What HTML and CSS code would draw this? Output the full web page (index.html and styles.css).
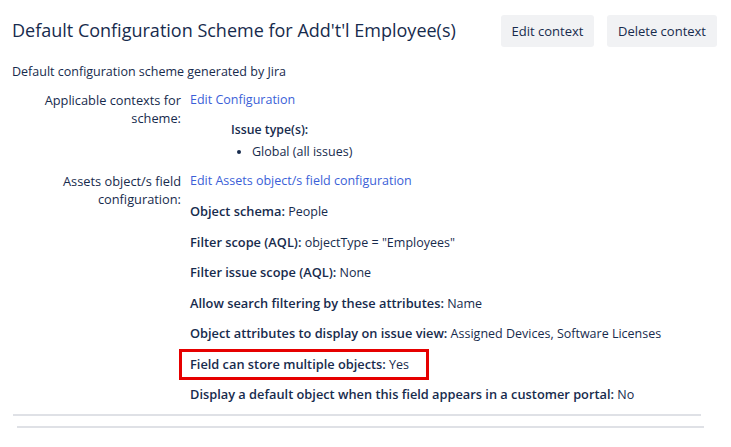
FILE: index.html
```html
<!DOCTYPE html>
<html lang="en">
<head>
  <meta charset="UTF-8" />
  <title>Default Configuration Scheme</title>
  <link rel="stylesheet" href="styles.css">
</head>
<body>
  <div class="page">
    <div class="header">
      <h2>Default Configuration Scheme for Add't'l Employee(s)</h2>
      <div class="header-actions">
        <button type="button" class="edit">Edit context</button>
        <button type="button" class="delete">Delete context</button>
      </div>
    </div>

    <p class="description">Default configuration scheme generated by Jira</p>

    <div class="field-row">
      <div class="field-label">Applicable contexts for scheme:</div>
      <div class="field-value">
        <a href="#">Edit Configuration</a>
        <div class="issue-types">
          <div class="issue-types-title">Issue type(s):</div>
          <ul>
            <li>Global (all issues)</li>
          </ul>
        </div>
      </div>
    </div>

    <div class="field-row assets">
      <div class="field-label">Assets object/s field configuration:</div>
      <div class="field-value">
        <a href="#">Edit Assets object/s field configuration</a>
        <div class="config-item"><strong>Object schema:</strong> People</div>
        <div class="config-item"><strong>Filter scope (AQL):</strong> objectType = "Employees"</div>
        <div class="config-item"><strong>Filter issue scope (AQL):</strong> None</div>
        <div class="config-item"><strong>Allow search filtering by these attributes:</strong> Name</div>
        <div class="config-item"><strong>Object attributes to display on issue view:</strong> Assigned Devices, Software Licenses</div>
        <div class="config-item highlight"><strong>Field can store multiple objects:</strong> Yes</div>
        <div class="config-item"><strong>Display a default object when this field appears in a customer portal:</strong> No</div>
      </div>
    </div>

    <div class="rule first"></div>
    <div class="rule second"></div>
  </div>
</body>
</html>
```
FILE: styles.css
```css
body {
  margin: 0;
  background: #fff;
  color: #172b4d;
  font-family: "Open Sans", "Noto Sans", sans-serif;
  font-size: 12.5px;
  line-height: 18px;
}
.page {
  padding: 15px 14px 0 12px;
}
.header {
  display: flex;
  align-items: center;
  justify-content: space-between;
}
.header h2 {
  margin: 0 0 3px;
  font-size: 18px;
  font-weight: 500;
  line-height: 24px;
  color: #172b4d;
}
.header-actions {
  display: flex;
  gap: 13px;
}
.header-actions button {
  height: 32px;
  padding: 0;
  border: none;
  border-radius: 3px;
  background: #f1f2f4;
  color: #172b4d;
  font-family: inherit;
  font-size: 13px;
  white-space: nowrap;
  cursor: pointer;
}
.header-actions button.edit {
  width: 93px;
}
.header-actions button.delete {
  width: 110px;
}
.description {
  margin: 16px 0 0;
}
.field-row {
  display: grid;
  grid-template-columns: 169px 1fr;
  column-gap: 9px;
  margin-top: 10px;
}
.field-row.assets {
  margin-top: 11px;
}
.field-label {
  text-align: right;
  font-size: 12.8px;
}
a {
  color: #3b5fd8;
  text-decoration: none;
}
.issue-types {
  margin: 12px 0 0 41px;
}
.issue-types-title {
  font-weight: 600;
  font-size: 12.3px;
}
.issue-types ul {
  margin: 4px 0 0;
  padding: 0 0 0 21px;
}
.config-item {
  height: 18px;
  margin-top: 12.5px;
  white-space: nowrap;
}
.config-item:first-of-type {
  margin-top: 12px;
}
.config-item strong {
  font-weight: 600;
  font-size: 12.8px;
}
.highlight {
  position: relative;
}
.highlight::after {
  content: "";
  position: absolute;
  left: -11px;
  top: -6px;
  width: 250px;
  height: 31px;
  border: 3px solid #e60000;
  box-sizing: border-box;
}
.rule {
  height: 2px;
  background: #dfe1e6;
}
.rule.first {
  margin: 11px 16px 0 1px;
}
.rule.second {
  margin: 10px 13px 0 5px;
}
```
